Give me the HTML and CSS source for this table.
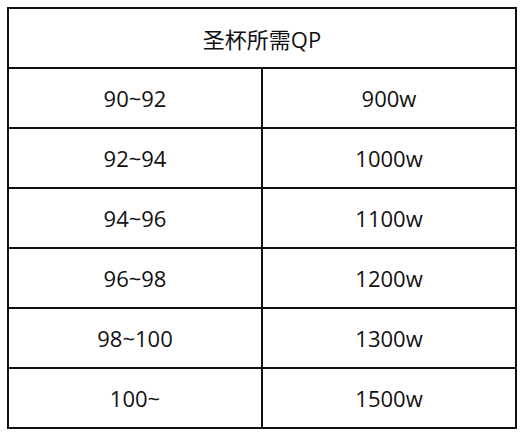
FILE: index.html
```html
<!DOCTYPE html>
<html lang="zh">
<head>
<meta charset="utf-8">
<link rel="stylesheet" href="styles.css">
</head>
<body>
<div class="wrap">
<table class="qp">
<tr><th colspan="2">圣杯所需QP</th></tr>
<tr><td>90~92</td><td>900w</td></tr>
<tr><td>92~94</td><td>1000w</td></tr>
<tr><td>94~96</td><td>1100w</td></tr>
<tr><td>96~98</td><td>1200w</td></tr>
<tr><td>98~100</td><td>1300w</td></tr>
<tr><td>100~</td><td>1500w</td></tr>
</table>
</div>
</body>
</html>
```
FILE: styles.css
```css
html, body {
  margin: 0;
  padding: 0;
  background: #fff;
}
.wrap {
  padding: 7px;
}
.qp {
  border-collapse: collapse;
  width: 510px;
  font-family: "Open Sans", "Noto Sans CJK SC", sans-serif;
  font-size: 22px;
  color: #111;
}
.qp th, .qp td {
  border: 2px solid #111;
  height: 58px;
  padding: 0;
  text-align: center;
  vertical-align: middle;
  font-weight: normal;
}
.qp td {
  width: 50%;
}
```
